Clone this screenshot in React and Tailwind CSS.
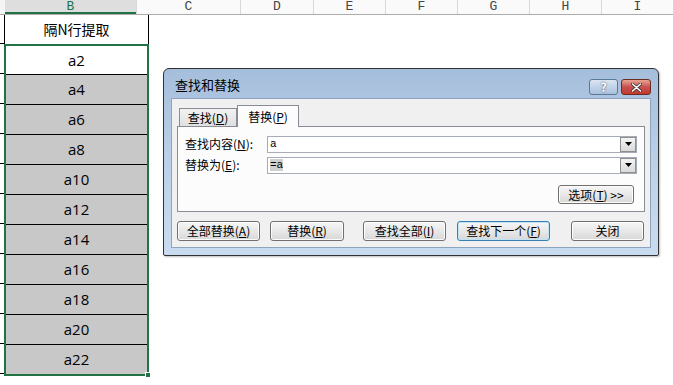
import React from 'react';

const cols = [
  { name: 'C', w: 'w-[104px]' },
  { name: 'D', w: 'w-[73px]' },
  { name: 'E', w: 'w-[72px]' },
  { name: 'F', w: 'w-[72px]' },
  { name: 'G', w: 'w-[72px]' },
  { name: 'H', w: 'w-[72px]' },
  { name: 'I', w: 'w-[72px]' },
];

const values = ['a2', 'a4', 'a6', 'a8', 'a10', 'a12', 'a14', 'a16', 'a18', 'a20', 'a22'];

const WinButton = ({ children, className = '', focus = false }) => (
  <div
    className={`flex items-center justify-center rounded-[3px] border bg-gradient-to-b from-[#f6f6f6] via-[#e8e8e8] to-[#d8d8d8] text-[12px] text-black ${
      focus ? 'border-[#3c7fb1] shadow-[inset_0_0_0_1px_#bfe3f7]' : 'border-[#707070] shadow-[inset_0_0_0_1px_#fcfcfc]'
    } ${className}`}
  >
    {children}
  </div>
);

const Combo = ({ value, selected }) => (
  <div className="flex h-[17px] w-[370px] items-center border border-[#a5acb5] bg-white">
    <div className="flex-1 pl-[2px] text-[11px] leading-none" style={{ fontFamily: '"Liberation Mono", monospace' }}>
      {selected ? <span className="bg-[#cfcfcf]">{value}</span> : value}
    </div>
    <div className="flex h-[15px] w-[16px] items-center justify-center border border-[#8f8f8f] bg-gradient-to-b from-[#f4f4f4] to-[#dadada]">
      <svg width="7" height="4" viewBox="0 0 7 4">
        <path d="M0 0h7L3.5 4z" fill="#000" />
      </svg>
    </div>
  </div>
);

const App = () => {
  return (
    <div
      className="relative h-[385px] w-[673px] overflow-hidden bg-white"
      style={{ fontFamily: '"Noto Sans CJK SC", "Liberation Sans", sans-serif' }}
    >
      {/* Column headers */}
      <div
        className="flex h-[15px] border-b border-[#ababab] text-[13px] leading-[14px] text-[#444]"
        style={{ fontFamily: '"Liberation Mono", monospace' }}
      >
        <div className="w-[5px] bg-[#f5f5f5]" />
        <div className="w-[144px] border-b-2 border-[#217346] bg-[#dedede] text-center text-[#217346]">B</div>
        {cols.map((c) => (
          <div key={c.name} className={`${c.w} shrink-0 border-l border-[#d8d8d8] bg-[#fafafa] text-center`}>
            {c.name}
          </div>
        ))}
      </div>

      {/* Sheet body */}
      <div className="flex">
        <div className="w-[5px] border-r border-black">
          <div className="h-[29px] border-b border-black" />
          {values.map((v) => (
            <div key={v} className="h-[30px] border-b border-black" />
          ))}
        </div>
        <div className="w-[144px]">
          <div className="flex h-[29px] items-center justify-center border-r border-black text-[14px] text-black">
            隔N行提取
          </div>
          <div className="relative -ml-[1px] border-2 border-[#217346]">
            {values.map((v, i) => (
              <div
                key={v}
                className={`flex items-center justify-center text-[15px] text-black ${
                  i === 0 ? 'h-[28px] bg-white' : 'h-[30px] border-t border-black bg-[#c8c8c8]'
                }`}
                style={{ fontFamily: '"Open Sans", "Liberation Sans", sans-serif' }}
              >
                {v}
              </div>
            ))}
            <div className="absolute -bottom-[4px] -right-[4px] h-[6px] w-[6px] border border-white bg-[#217346]" />
          </div>
        </div>
      </div>

      {/* Find & Replace dialog */}
      <div className="absolute left-[163px] top-[68px] flex h-[188px] w-[496px] flex-col rounded-t-[6px] rounded-b-[2px] border border-[#333] bg-gradient-to-b from-[#a5bedb] via-[#bcd1e8] to-[#c9dbef] px-[7px] pb-[7px] shadow-[1px_1px_2px_rgba(0,0,0,0.25)]">
        <div className="flex h-[29px] items-center justify-between">
          <span className="pl-[4px] pt-[3px] text-[13px] text-black">查找和替换</span>
          <div className="flex gap-[3px] self-start pt-[10px]">
            <div className="flex h-[16px] w-[29px] items-center justify-center rounded-[3px] border border-[#5a7899] bg-gradient-to-b from-[#dbe6f3] to-[#a9c0dc] text-[12px] font-bold leading-none text-white [text-shadow:0_0_2px_#334]">
              ?
            </div>
            <div className="flex h-[16px] w-[30px] items-center justify-center rounded-[3px] border border-[#6b2b24] bg-gradient-to-b from-[#e8a493] via-[#c75050] to-[#c0392b]">
              <svg width="11" height="9" viewBox="0 0 11 9">
                <path d="M1.5 1l8 7M9.5 1l-8 7" stroke="#333" strokeWidth="3" strokeLinecap="round" />
                <path d="M1.5 1l8 7M9.5 1l-8 7" stroke="#fff" strokeWidth="1.6" strokeLinecap="round" />
              </svg>
            </div>
          </div>
        </div>

        <div className="flex flex-1 flex-col border border-[#8ea4bd] bg-[#f0f0f0] px-[5px] pt-[5px]">
          {/* Tabs */}
          <div className="flex h-[22px] items-end pl-[2px]">
            <div className="flex h-[18px] w-[58px] items-center justify-center border border-b-0 border-[#898c95] bg-gradient-to-b from-[#f2f2f2] to-[#e0e0e0] text-[12px]">
              查找(<u>D</u>)
            </div>
            <div className="relative -mb-[1px] flex h-[22px] w-[62px] items-center justify-center border border-b-0 border-[#898c95] bg-[#fcfcfc] text-[12px]">
              替换(<u>P</u>)
            </div>
          </div>
          <div className="flex h-[86px] w-[468px] flex-col border border-[#898c95] bg-[#fcfcfc] pl-[7px] pt-[8px]">
            <div className="flex items-center">
              <span className="w-[82px] text-[12px]">查找内容(<u>N</u>):</span>
              <Combo value="a" />
            </div>
            <div className="mt-[3px] flex items-center">
              <span className="w-[82px] text-[12px]">替换为(<u>E</u>):</span>
              <Combo value="=a" selected />
            </div>
            <div className="mt-[11px] flex justify-end pr-[10px]">
              <WinButton className="h-[19px] w-[76px]">选项(<u>T</u>) &gt;&gt;</WinButton>
            </div>
          </div>
          {/* Bottom buttons */}
          <div className="mt-[9px] flex items-center">
            <WinButton className="h-[20px] w-[83px]">全部替换(<u>A</u>)</WinButton>
            <WinButton className="ml-[10px] h-[20px] w-[74px]">替换(<u>R</u>)</WinButton>
            <WinButton className="ml-[19px] h-[20px] w-[83px]">查找全部(<u>I</u>)</WinButton>
            <WinButton focus className="ml-[11px] h-[20px] w-[93px]">查找下一个(<u>F</u>)</WinButton>
            <WinButton className="ml-[21px] h-[20px] w-[73px]">关闭</WinButton>
          </div>
        </div>
      </div>
    </div>
  );
};

export default App;
